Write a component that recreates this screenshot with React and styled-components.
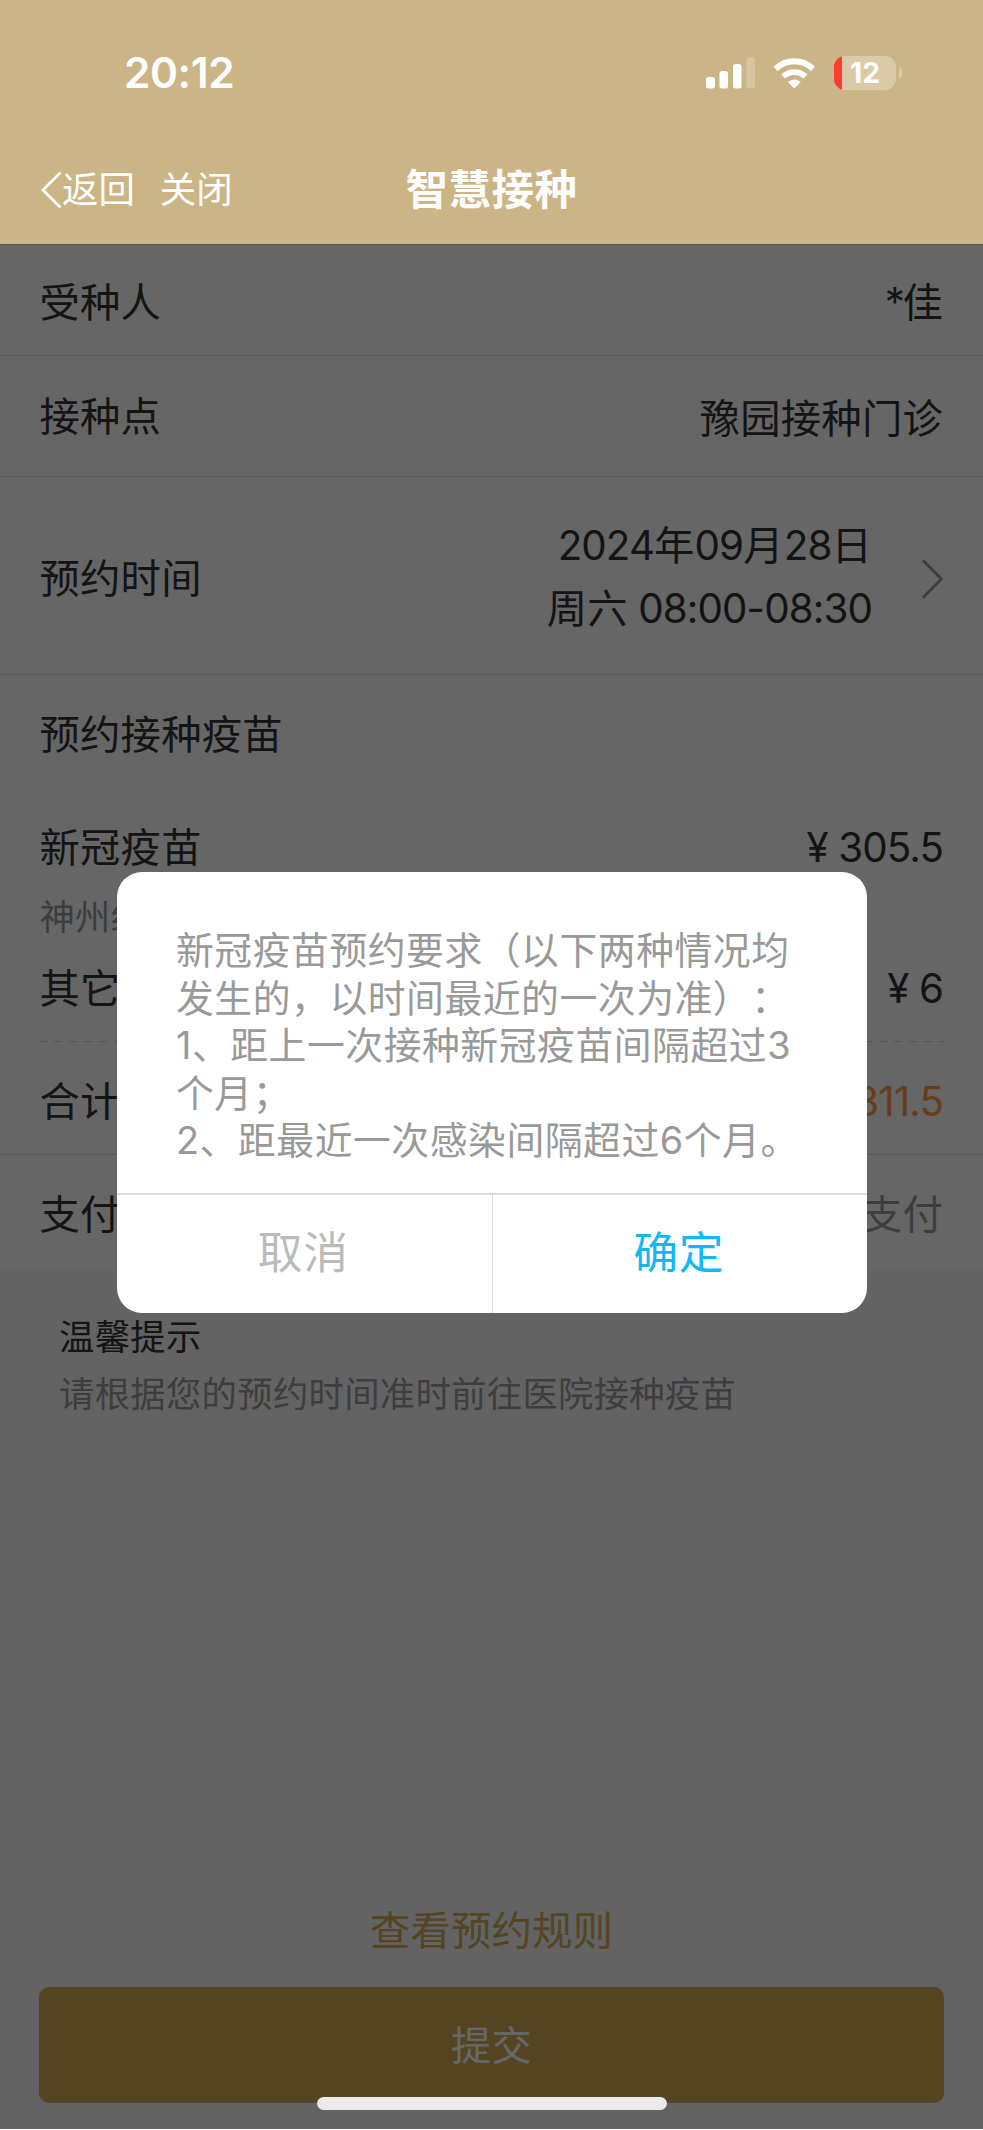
import React from 'react';
import styled, { createGlobalStyle } from 'styled-components';

const GlobalStyle = createGlobalStyle`
  body {
    margin: 0;
    font-family: Inter, 'Noto Sans CJK SC', sans-serif;
    font-size: 40.3px;
    color: #333;
    text-spacing-trim: space-all;
  }

  * {
    box-sizing: border-box;
  }
`;

const Screen = styled.div`
  position: relative;
  display: flex;
  flex-direction: column;
  width: 983px;
  height: 2130px;
  overflow: hidden;
  background: #f7f7f7;
`;

const Header = styled.header`
  display: flex;
  flex-direction: column;
  height: 244px;
  background: #cbb586;
  color: #fff;
`;

const StatusBar = styled.div`
  display: flex;
  align-items: center;
  justify-content: space-between;
  height: 146px;
  padding: 0 81px 0 124px;
`;

const Clock = styled.div`
  font-size: 42.4px;
  font-weight: 600;
  line-height: 50px;
  letter-spacing: -0.4px;
`;

const StatusIcons = styled.div`
  display: flex;
  align-items: center;
  gap: 18px;
`;

const Battery = styled.div`
  display: flex;
  align-items: center;
  gap: 3px;
`;

const BatteryBody = styled.div`
  width: 62px;
  height: 34px;
  border-radius: 11px;
  background: linear-gradient(to right, #ff3b30 8px, #dacaa8 8px);
  font-size: 28.2px;
  font-weight: 700;
  line-height: 34px;
  text-align: center;
`;

const BatteryNub = styled.div`
  width: 3px;
  height: 10px;
  border-radius: 0 3px 3px 0;
  background: #dacaa8;
`;

const NavBar = styled.div`
  display: grid;
  grid-template-columns: 1fr auto 1fr;
  align-items: center;
  height: 87px;
  padding: 0 41px;
`;

const NavActions = styled.div`
  display: flex;
  align-items: center;
  font-size: 36.4px;
  line-height: 48px;

  span + span {
    margin-left: 25px;
  }
`;

const Title = styled.div`
  font-size: 42.4px;
  font-weight: 700;
  line-height: 56px;
  letter-spacing: 0.5px;
`;

const Form = styled.main`
  display: flex;
  flex-direction: column;
  height: 1026px;
  border-top: 1px solid #d4d4c8;
  background: #fff;
  letter-spacing: 0.25px;
`;

const Row = styled.div`
  display: flex;
  align-items: center;
  justify-content: space-between;
  flex: none;
  height: ${p => p.$height}px;
  padding: ${p => p.$top || 0}px 40px ${p => p.$bottom || 0}px 39.5px;
  border-bottom: ${p => (p.$line ? '1px solid #dfdfdf' : 'none')};
  line-height: 56px;
`;

const Value = styled.span`
  padding-top: ${p => p.$drop || 0}px;
  color: ${p => p.$color || '#333'};
`;

// Latin digits run a little tighter than the Chinese text around them
const Num = styled.span`
  letter-spacing: -0.9px;
`;

const Mask = styled.span`
  letter-spacing: -2.5px;
`;

const Picker = styled.div`
  display: flex;
  align-items: center;
  gap: 50px;
  text-align: right;
  line-height: 62.6px;
`;

const PickerText = styled.div`
  margin-top: -2px;
`;

const Maker = styled.div`
  flex: none;
  height: 48px;
  padding-left: 39.5px;
  font-size: 35.3px;
  line-height: 50px;
  letter-spacing: 0.3px;
  color: #999;
`;

const Dashes = styled.div`
  flex: none;
  height: 1px;
  margin: 0 39px;
  background: repeating-linear-gradient(
    to right,
    #d8d8d8 0 8px,
    transparent 8px 15px
  );
`;

const Tips = styled.section`
  flex: 1;
  padding: 39px 59px 0;
  font-size: 35.3px;
  line-height: 57px;
  letter-spacing: 0.35px;
`;

const TipText = styled.div`
  color: #999;
`;

const Footer = styled.footer`
  display: flex;
  flex-direction: column;
  align-items: center;
  gap: 28px;
  padding: 0 39px 27px;
  letter-spacing: 0.2px;
`;

const RulesLink = styled.a`
  color: #d2aa53;
  line-height: 56px;
`;

const SubmitButton = styled.button`
  align-self: stretch;
  height: 116px;
  padding: 1px 0 0;
  border: 0;
  border-radius: 10px;
  background: #d2aa53;
  color: #fff;
  font: inherit;
  line-height: 56px;
  letter-spacing: inherit;
`;

const Overlay = styled.div`
  position: absolute;
  inset: 244px 0 1px;
  display: flex;
  justify-content: center;
  align-items: flex-start;
  padding: 628px 0 0 1px;
  background: rgba(0, 0, 0, 0.6);
`;

const Dialog = styled.div`
  display: flex;
  flex-direction: column;
  width: 750px;
  height: 441px;
  border-radius: 25px;
  background: #fff;
`;

const Message = styled.div`
  flex: 1;
  padding: 55px 0 0 59px;
  font-size: 37.8px;
  line-height: 47.5px;
  letter-spacing: 0.55px;
  color: #999;
  white-space: nowrap;
`;

const DialogActions = styled.div`
  display: flex;
  height: 120px;
  border-top: 2px solid #dedede;
`;

const DialogButton = styled.button`
  flex: 1;
  padding: 0 2px 2px 0;
  border: 0;
  background: none;
  color: ${p => (p.$primary ? '#12b7f5' : '#bbb')};
  font: inherit;
  font-size: 44.8px;
  line-height: 60px;
  letter-spacing: 0.6px;

  & + & {
    border-left: 1px solid #dedede;
  }
`;

const HomeIndicator = styled.div`
  position: absolute;
  left: 317px;
  bottom: 20px;
  width: 350px;
  height: 13px;
  border-radius: 7px;
  background: #ebebeb;
`;

const SignalIcon = () => (
  <svg width="49" height="32" viewBox="0 0 49 32" fill="#fff">
    <rect x="0" y="20" width="9" height="11.5" rx="2.5" />
    <rect x="13.5" y="14" width="8.5" height="17.5" rx="2.5" />
    <rect x="27" y="7" width="8.5" height="24.5" rx="2.5" />
    <rect x="40.5" y="0.5" width="8.5" height="31" rx="2.5" opacity="0.22" />
  </svg>
);

const WifiIcon = () => (
  <svg width="43" height="32" viewBox="0 0 43 32" fill="none">
    <path d="M2.6 11.8a27 27 0 0 1 37.4 0" stroke="#fff" strokeWidth="6" />
    <path d="M10.1 19.6a16.2 16.2 0 0 1 22.4 0" stroke="#fff" strokeWidth="5.6" />
    <path d="M14.8 25a9.4 9.4 0 0 1 13 0L21.3 31.5Z" fill="#fff" />
  </svg>
);

const BackIcon = () => (
  <svg width="21" height="38" viewBox="0 0 21 38" fill="none">
    <path d="M19.5 1.5 2 19l17.5 17.5" stroke="#fff" strokeWidth="2.8" />
  </svg>
);

const ArrowIcon = () => (
  <svg width="21" height="40" viewBox="0 0 21 40" fill="none">
    <path d="M1 1.5 19.5 20 1 38.5" stroke="#999" strokeWidth="2.8" />
  </svg>
);

const MESSAGE_LINES = [
  '新冠疫苗预约要求（以下两种情况均',
  '发生的，以时间最近的一次为准）：',
  '1、距上一次接种新冠疫苗间隔超过3',
  '个月；',
  '2、距最近一次感染间隔超过6个月。',
];

export default function App() {
  return (
    <Screen>
      <GlobalStyle />
      <Header>
        <StatusBar>
          <Clock>20:12</Clock>
          <StatusIcons>
            <SignalIcon />
            <WifiIcon />
            <Battery>
              <BatteryBody>12</BatteryBody>
              <BatteryNub />
            </Battery>
          </StatusIcons>
        </StatusBar>
        <NavBar>
          <NavActions>
            <BackIcon />
            <span>返回</span>
            <span>关闭</span>
          </NavActions>
          <Title>智慧接种</Title>
        </NavBar>
      </Header>

      <Form>
        <Row $height={111} $top={5} $line>
          <span>受种人</span>
          <Value>
            <Mask>*</Mask>佳
          </Value>
        </Row>
        <Row $height={121} $top={1} $line>
          <span>接种点</span>
          <Value $drop={4}>豫园接种门诊</Value>
        </Row>
        <Row $height={198} $top={7} $line>
          <span>预约时间</span>
          <Picker>
            <PickerText>
              <div>
                <Num>2024</Num>年<Num>09</Num>月<Num>28</Num>日
              </div>
              <div>
                周六<Num> 08:00-08:30</Num>
              </div>
            </PickerText>
            <ArrowIcon />
          </Picker>
        </Row>
        <Row $height={120}>
          <span>预约接种疫苗</span>
        </Row>
        <Row $height={98} $top={8}>
          <span>新冠疫苗</span>
          <Value>
            <Num>¥ 305.5</Num>
          </Value>
        </Row>
        <Maker>神州细</Maker>
        <Row $height={100} $bottom={5}>
          <span>其它</span>
          <Value>
            <Num>¥ 6</Num>
          </Value>
        </Row>
        <Dashes />
        <Row $height={113} $top={7} $line>
          <span>合计</span>
          <Value $color="#ff9a3c">
            <Num>311.5</Num>
          </Value>
        </Row>
        <Row $height={115} $top={5}>
          <span>支付</span>
          <Value $color="#999">支付</Value>
        </Row>
      </Form>

      <Tips>
        <div>温馨提示</div>
        <TipText>请根据您的预约时间准时前往医院接种疫苗</TipText>
      </Tips>

      <Footer>
        <RulesLink>查看预约规则</RulesLink>
        <SubmitButton>提交</SubmitButton>
      </Footer>

      <Overlay>
        <Dialog>
          <Message>
            {MESSAGE_LINES.map(line => (
              <div key={line}>{line}</div>
            ))}
          </Message>
          <DialogActions>
            <DialogButton>取消</DialogButton>
            <DialogButton $primary>确定</DialogButton>
          </DialogActions>
        </Dialog>
      </Overlay>
      <HomeIndicator />
    </Screen>
  );
}
